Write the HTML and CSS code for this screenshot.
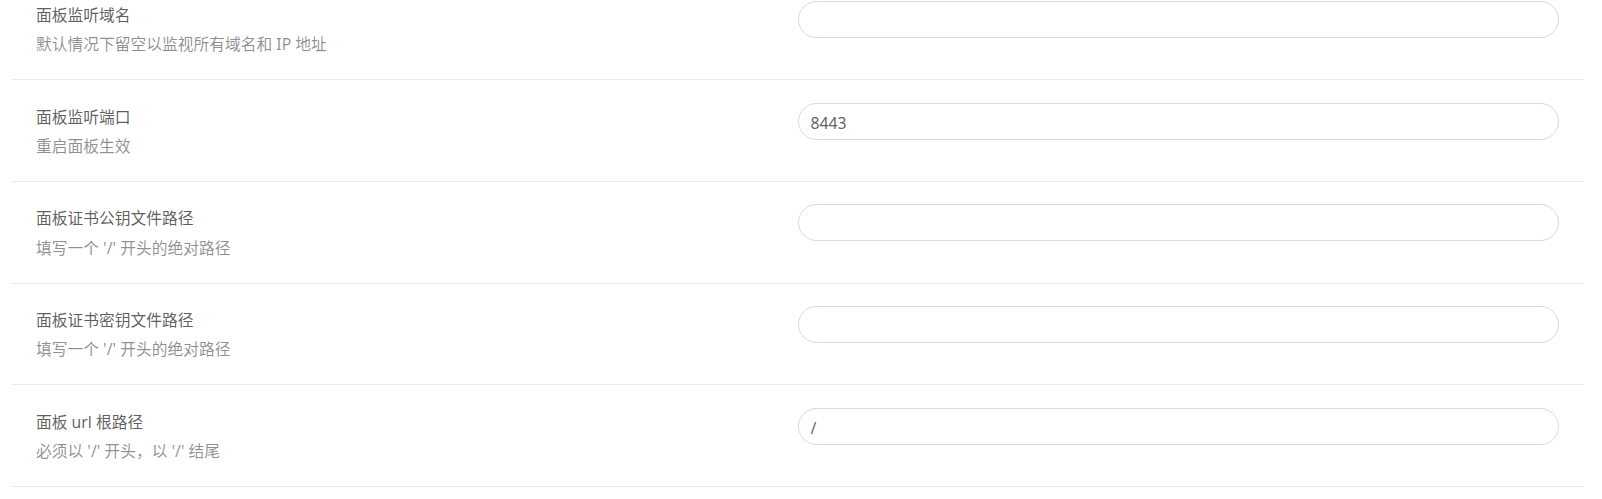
FILE: index.html
```html
<!DOCTYPE html>
<html lang="zh-CN">
<head>
<meta charset="utf-8">
<title>面板设置</title>
<link rel="stylesheet" href="styles.css">
</head>
<body>
<div class="list">
  <div class="item">
    <div class="meta">
      <div class="title">面板监听域名</div>
      <div class="desc">默认情况下留空以监视所有域名和 IP 地址</div>
    </div>
    <div class="field"><input class="input" type="text" value=""></div>
  </div>
  <div class="item">
    <div class="meta">
      <div class="title">面板监听端口</div>
      <div class="desc">重启面板生效</div>
    </div>
    <div class="field"><input class="input" type="text" value="8443"></div>
  </div>
  <div class="item">
    <div class="meta">
      <div class="title">面板证书公钥文件路径</div>
      <div class="desc">填写一个 '/' 开头的绝对路径</div>
    </div>
    <div class="field"><input class="input" type="text" value=""></div>
  </div>
  <div class="item">
    <div class="meta">
      <div class="title">面板证书密钥文件路径</div>
      <div class="desc">填写一个 '/' 开头的绝对路径</div>
    </div>
    <div class="field"><input class="input" type="text" value=""></div>
  </div>
  <div class="item">
    <div class="meta">
      <div class="title">面板 url 根路径</div>
      <div class="desc">必须以 '/' 开头，以 '/' 结尾</div>
    </div>
    <div class="field"><input class="input" type="text" value="/"></div>
  </div>
</div>
</body>
</html>
```
FILE: styles.css
```css
html, body {
  margin: 0;
  padding: 0;
  background: #ffffff;
  overflow: hidden;
}

body {
  font-family: "Noto Sans", "Noto Sans CJK SC", sans-serif;
  font-size: 15.75px;
  color: rgba(0, 0, 0, 0.65);
}

.list {
  width: 1571px;
  margin: -21.75px 0 0 12px;
}

.item {
  box-sizing: border-box;
  height: 101.75px;
  display: flex;
  align-items: flex-start;
  padding: 22.5px 24px 0;
  border-bottom: 1px solid #e8e8e8;
}

.meta {
  flex: 1 1 50%;
  min-width: 0;
  padding-top: 2px;
}

.title {
  line-height: 24.75px;
  margin-bottom: 4.5px;
  color: rgba(0, 0, 0, 0.65);
}

.desc {
  line-height: 24.75px;
  color: rgba(0, 0, 0, 0.45);
}

.field {
  flex: 1 1 50%;
  min-width: 0;
}

.input {
  box-sizing: border-box;
  display: block;
  width: 100%;
  height: 37px;
  margin: 0;
  padding: 4px 12px 0;
  border: 1px solid #d9d9d9;
  border-radius: 18.5px;
  background: #ffffff;
  font-family: "Noto Sans", "Noto Sans CJK SC", sans-serif;
  font-size: 15.75px;
  color: rgba(0, 0, 0, 0.65);
  outline: none;
}
```
